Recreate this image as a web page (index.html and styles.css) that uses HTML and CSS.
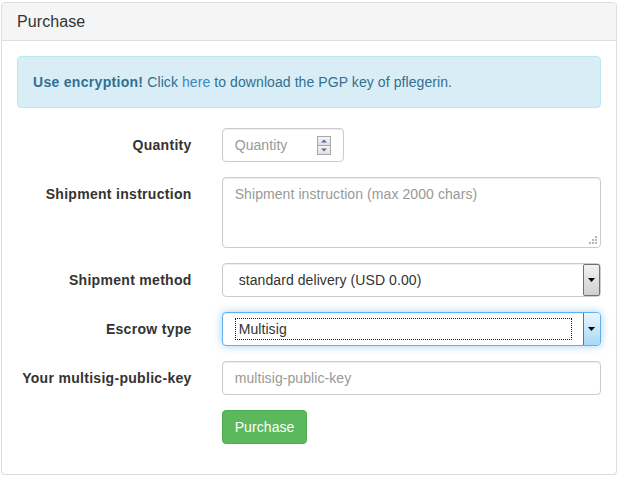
FILE: index.html
```html
<!DOCTYPE html>
<html>
<head>
<meta charset="utf-8">
<link rel="stylesheet" href="styles.css">
</head>
<body>
<div class="page">
  <div class="panel">
    <div class="panel-heading">Purchase</div>
    <div class="panel-body">
      <div class="alert"><strong>Use encryption!</strong> Click <a class="alert-link" href="#">here</a> to download the PGP key of pflegerin.</div>
      <form class="form">
        <div class="form-group">
          <label class="control-label">Quantity</label>
          <div class="field">
            <div class="form-control qty">
              <span class="ph">Quantity</span>
              <svg class="spin" width="14" height="19" viewBox="0 0 14 19">
                <defs>
                  <linearGradient id="sg" x1="0" y1="0" x2="0" y2="1">
                    <stop offset="0" stop-color="#f6f6f6"/>
                    <stop offset="1" stop-color="#dedede"/>
                  </linearGradient>
                </defs>
                <rect x="0.5" y="0.5" width="13" height="9" fill="url(#sg)" stroke="#a8a8a8"/>
                <rect x="0.5" y="9.5" width="13" height="9" fill="url(#sg)" stroke="#a8a8a8"/>
                <polygon points="4,6.5 10,6.5 7,3.5" fill="#4f6ea8"/>
                <polygon points="4,12.5 10,12.5 7,15.5" fill="#4f6ea8"/>
              </svg>
            </div>
          </div>
        </div>
        <div class="form-group">
          <label class="control-label">Shipment instruction</label>
          <div class="field">
            <div class="form-control textarea">
              <span class="ph">Shipment instruction (max 2000 chars)</span>
              <svg class="grip" width="10" height="10" viewBox="0 0 10 10">
                <rect x="7" y="1" width="2" height="2" fill="#b5b5b5"/>
                <rect x="4" y="4" width="2" height="2" fill="#b5b5b5"/>
                <rect x="7" y="4" width="2" height="2" fill="#b5b5b5"/>
                <rect x="1" y="7" width="2" height="2" fill="#b5b5b5"/>
                <rect x="4" y="7" width="2" height="2" fill="#b5b5b5"/>
                <rect x="7" y="7" width="2" height="2" fill="#b5b5b5"/>
              </svg>
            </div>
          </div>
        </div>
        <div class="form-group">
          <label class="control-label">Shipment method</label>
          <div class="field">
            <div class="form-control select">
              <span class="sel-text">standard delivery (USD 0.00)</span>
              <span class="sel-btn"><svg width="7" height="4" viewBox="0 0 7 4"><polygon points="0,0 7,0 3.5,4" fill="#000"/></svg></span>
            </div>
          </div>
        </div>
        <div class="form-group">
          <label class="control-label">Escrow type</label>
          <div class="field">
            <div class="form-control select focused">
              <span class="sel-text"><span class="focus-ring">Multisig</span></span>
              <span class="sel-btn blue"><svg width="7" height="4" viewBox="0 0 7 4"><polygon points="0,0 7,0 3.5,4" fill="#000"/></svg></span>
            </div>
          </div>
        </div>
        <div class="form-group">
          <label class="control-label">Your multisig-public-key</label>
          <div class="field">
            <div class="form-control"><span class="ph">multisig-public-key</span></div>
          </div>
        </div>
        <div class="form-group">
          <div></div>
          <div class="field">
            <button type="button" class="btn">Purchase</button>
          </div>
        </div>
      </form>
    </div>
  </div>
</div>
</body>
</html>
```
FILE: styles.css
```css
* { box-sizing: border-box; }
html, body { margin: 0; padding: 0; background: #fff; }
body {
  font-family: "Liberation Sans", Arial, sans-serif;
  font-size: 14px;
  line-height: 20px;
  color: #333;
  letter-spacing: 0.08px;
}
.page { padding: 2px 2px 0 1px; }
.panel {
  width: 616px;
  border: 1px solid #ddd;
  border-radius: 4px;
  background: #fff;
  box-shadow: 0 1px 1px rgba(0,0,0,.05);
}
.panel-heading {
  background: #f5f5f5;
  border-bottom: 1px solid #ddd;
  border-radius: 3px 3px 0 0;
  padding: 10px 15px;
  font-size: 16px;
  line-height: 17px;
  color: #333;
}
.panel-body { padding: 15px; }
.alert {
  background: #d9edf7;
  border: 1px solid #bce8f1;
  border-radius: 4px;
  color: #31708f;
  padding: 15px;
  margin-bottom: 20px;
}
.alert strong { font-weight: bold; letter-spacing: 0.3px; }
.alert-link { color: #3c87c0; text-decoration: none; }
.form { margin: 0; }
.form-group {
  display: grid;
  grid-template-columns: 33.3333% 66.6667%;
  margin: 0 -15px 15px;
}
.control-label {
  padding: 7px 15px 0;
  text-align: right;
  font-weight: bold;
  letter-spacing: 0.3px;
}
.field { padding: 0 15px; }
.form-control {
  height: 34px;
  padding: 6px 12px;
  border: 1px solid #ccc;
  border-radius: 4px;
  box-shadow: inset 0 1px 1px rgba(0,0,0,.075);
  background: #fff;
  display: flex;
  align-items: center;
}
.ph { color: #999; }
.qty {
  width: 122px;
  justify-content: space-between;
}
.spin { display: block; flex: none; }
.textarea {
  height: 71px;
  align-items: flex-start;
  position: relative;
}
.grip { position: absolute; right: 2px; bottom: 2px; }
.select {
  padding: 0;
  align-items: stretch;
}
.sel-text {
  flex: 1;
  display: flex;
  align-items: center;
  padding-left: 16px;
  color: #333;
}
.sel-btn {
  width: 17px;
  flex: none;
  border: 1px solid #707070;
  border-radius: 2px;
  background: linear-gradient(#f2f2f2, #d0d0d0);
  display: flex;
  align-items: center;
  justify-content: center;
}
.sel-btn svg { display: block; }
.focused {
  border-color: #66afe9;
  box-shadow: inset 0 1px 1px rgba(0,0,0,.075), 0 0 8px rgba(102,175,233,.6);
}
.focused .sel-text { padding-left: 12px; padding-right: 11px; }
.focus-ring {
  flex: 1;
  height: 22px;
  border: 1px dotted #222;
  padding-left: 3px;
  line-height: 20px;
}
.sel-btn.blue {
  border: 0;
  border-left: 1px solid #3c7fb1;
  border-radius: 0 3px 3px 0;
  background: linear-gradient(#eaf6fd, #a7d9f5);
}
.btn {
  font-family: "Liberation Sans", Arial, sans-serif;
  font-size: 14px;
  line-height: 20px;
  letter-spacing: 0.08px;
  padding: 6px 12px;
  color: #fff;
  background: #5cb85c;
  border: 1px solid #4cae4c;
  border-radius: 4px;
  cursor: pointer;
}
```
